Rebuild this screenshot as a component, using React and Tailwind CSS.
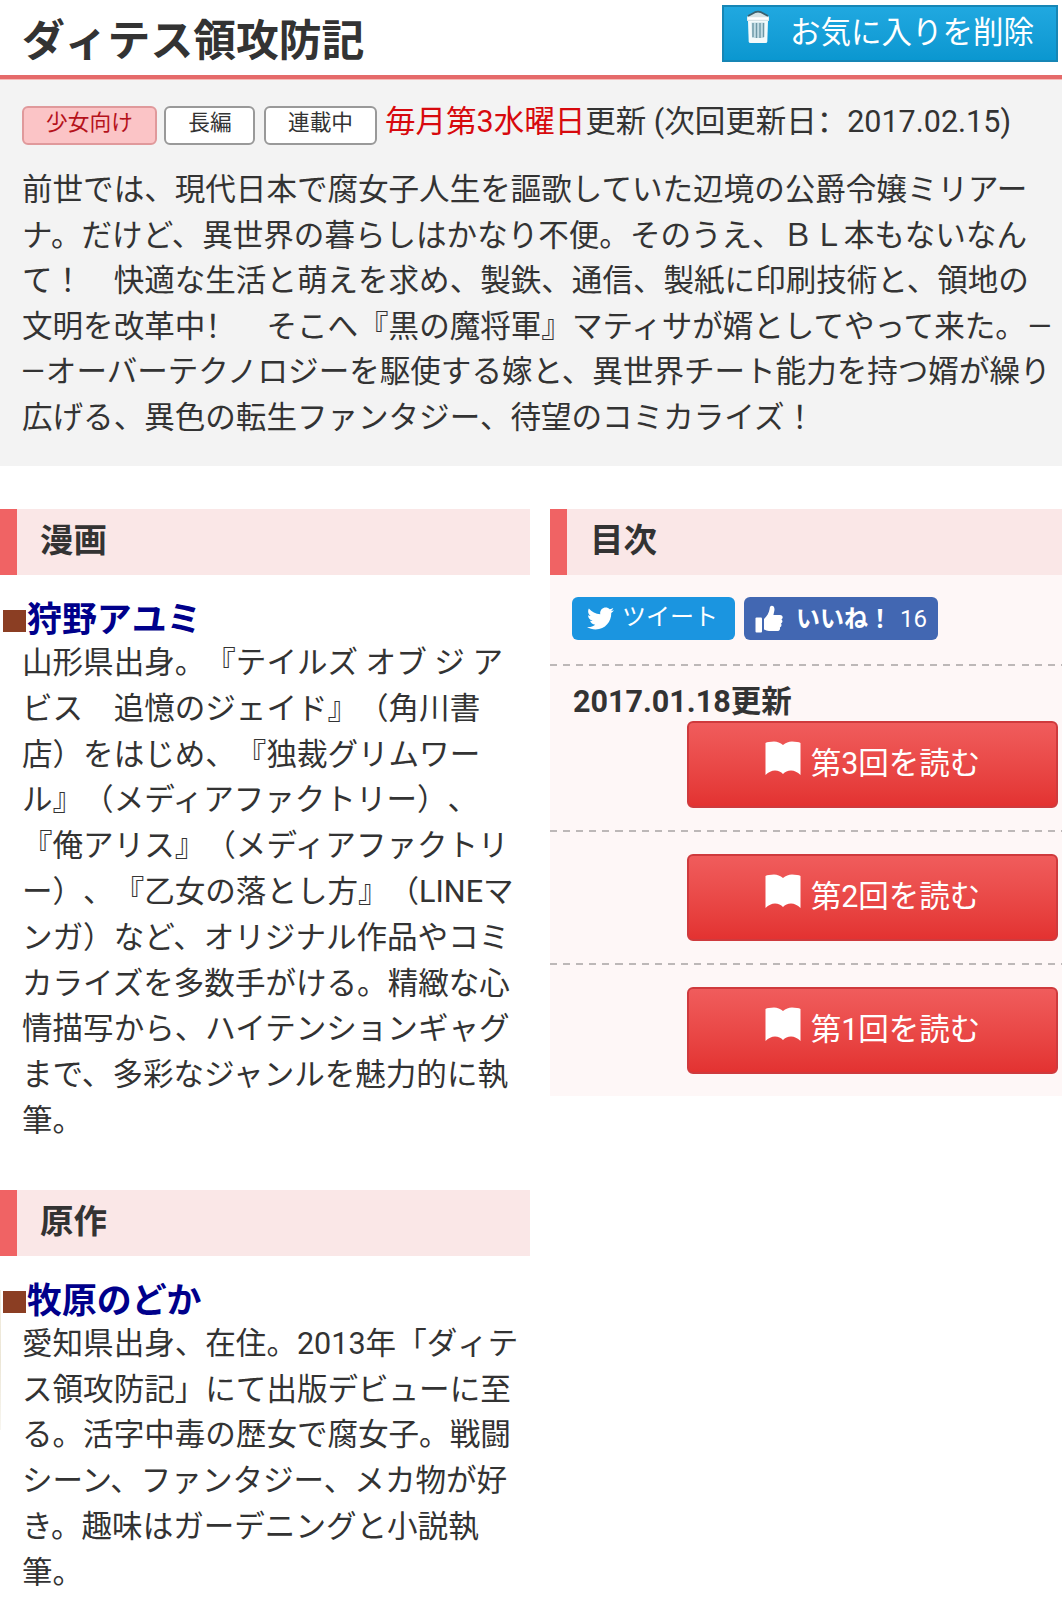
import { FaTwitter } from 'react-icons/fa';

const synopsis = [
  '前世では、現代日本で腐女子人生を謳歌していた辺境の公爵令嬢ミリアー',
  'ナ。だけど、異世界の暮らしはかなり不便。そのうえ、ＢＬ本もないなん',
  'て！　快適な生活と萌えを求め、製鉄、通信、製紙に印刷技術と、領地の',
  <>文明を改革中<span className="font-['Noto_Sans_CJK_SC',sans-serif] leading-none">！　</span>そこへ『黒の魔将軍』マティサが婿としてやって来た。<span className="ml-[2px]">—</span></>,
  <><span className="-ml-px mr-px">—</span>オーバーテクノロジーを駆使する嫁と、異世界チート能力を持つ婿が繰り</>,
  '広げる、異色の転生ファンタジー、待望のコミカライズ！',
];

const creators = [
  {
    role: '漫画',
    name: '狩野アユミ',
    bio: [
      '山形県出身。『テイルズ オブ ジ ア',
      'ビス　追憶のジェイド』（角川書',
      '店）をはじめ、『独裁グリムワー',
      'ル』（メディアファクトリー）、',
      '『俺アリス』（メディアファクトリ',
      'ー）、『乙女の落とし方』（LINEマ',
      'ンガ）など、オリジナル作品やコミ',
      'カライズを多数手がける。精緻な心',
      '情描写から、ハイテンションギャグ',
      'まで、多彩なジャンルを魅力的に執',
      '筆。',
    ],
  },
  {
    role: '原作',
    name: '牧原のどか',
    bio: [
      '愛知県出身、在住。2013年「ダィテ',
      'ス領攻防記」にて出版デビューに至',
      'る。活字中毒の歴女で腐女子。戦闘',
      'シーン、ファンタジー、メカ物が好',
      'き。趣味はガーデニングと小説執',
      '筆。',
    ],
  },
];

const episodes = [
  { number: 3, updated: '2017.01.18更新' },
  { number: 2 },
  { number: 1 },
];

function TrashIcon() {
  return (
    <svg viewBox="0 0 24 34" className="h-[34px] w-6">
      <path d="M1 11 V7.5 Q1 6 3 5.5 L9 2.5 Q12 1.5 15 2.5 L21 5.5 Q23 6 23 7.5 V11Z" fill="#d5e2e5" />
      <path d="M2 6 L9 2.2 Q12 1 15 2.2 L22 6" fill="none" stroke="#3d616e" strokeWidth="1.8" />
      <path d="M1.5 8.5 H22.5" stroke="#fff" strokeWidth="2.5" />
      <path d="M2 11 H22 L21.3 31.5 Q21.2 33 19.5 33 H4.5 Q2.8 33 2.7 31.5Z" fill="#f3fafb" />
      <path d="M5.5 12.5 H18.5 L18 28 H6Z" fill="#c3dde5" />
      <path d="M7 13 V27 M10.5 13 V28 M14 13 V28 M17.5 13 V27" stroke="#6d98a6" strokeWidth="1.4" />
    </svg>
  );
}

function ThumbIcon() {
  return (
    <svg viewBox="0 0 28 28" className="h-7 w-7" fill="#fff">
      <rect x="0.5" y="12.5" width="6.5" height="15" rx="1" />
      <path d="M9 14 C12 11 14 8 14.6 4 C14.8 1.5 15.5 0.7 16.8 0.7 C19 0.7 19.8 3 19.4 5.5 L18.4 10 H25 C28.2 10 28.4 13.3 26.4 14.3 C28 15.5 27.6 17.8 26 18.5 C27 20 26.4 21.8 24.9 22.4 C25.5 24.5 24.2 26 22 26 H14 C12 26 11 25 9 24.5Z" />
    </svg>
  );
}

function BookIcon() {
  return (
    <svg viewBox="0 0 36 35" className="h-[35px] w-9" fill="#fff">
      <path d="M0.5 2 Q3 0.5 9 0.5 Q14 0.5 18 4 Q22 0.5 27 0.5 Q33 0.5 35.5 2 V34 Q31 29.5 26 29.5 Q21 29.5 18 33 Q15 29.5 10 29.5 Q5 29.5 0.5 34Z" />
    </svg>
  );
}

function SectionHeading({ children }) {
  return (
    <h2 className="h-[66px] border-l-[17px] border-[#f06364] bg-[#fae7e7] pl-[23px] text-[33.5px] leading-[64px] font-bold">
      {children}
    </h2>
  );
}

function Lines({ lines, className }) {
  return (
    <p className={className}>
      {lines.map((line, index) => (
        <span key={index} className="block whitespace-nowrap">{line}</span>
      ))}
    </p>
  );
}

// Dashed rule between the rows of the contents list
function DashedRule() {
  return (
    <div className="h-[2px] bg-[repeating-linear-gradient(90deg,#bdb8b8_0,#bdb8b8_7px,transparent_7px,transparent_13.1px)]" />
  );
}

function Episode({ number, updated }) {
  return (
    <li>
      <DashedRule />
      <div className="pt-[22px] pr-1 pb-[22px]">
        {updated && <p className="-mt-[9px] mb-0 h-[42px] pl-[23px] text-[30.5px] leading-[46px] font-bold">{updated}</p>}
        <a className="ml-auto flex h-[87px] w-[371px] justify-center rounded-[6px] border-2 border-[#cf3a3d] bg-linear-to-b from-[#f05c5c] to-[#e33231] text-white">
          <span className="mt-[18px] mr-[10px]"><BookIcon /></span>
          <span className="text-[30.5px] leading-[82px]">第{number}回を読む</span>
        </a>
      </div>
    </li>
  );
}

function App() {
  return (
    <div className="relative h-[1621px] w-[1062px] overflow-hidden bg-white font-['Roboto','Noto_Sans_CJK_JP',sans-serif] text-[#333] [text-spacing-trim:space-all]">
      <header className="flex h-[79px] justify-between border-b-4 border-[#e56a6a] pr-1 pl-[22px]">
        <h1 className="text-[42.8px] leading-[82px] font-bold">ダィテス領攻防記</h1>
        <a className="mt-[5px] flex h-[57px] w-[336px] border-2 border-[#1686b5] bg-linear-to-b from-[#20a8e0] to-[#0a97d0] pl-[22px] text-white">
          <span className="mt-[3px]"><TrashIcon /></span>
          <span className="ml-[20px] text-[30.5px] leading-[52px]">お気に入りを削除</span>
        </a>
      </header>

      <section className="h-[387px] border-t border-[#f7b9b7] bg-[#f3f3f3] pt-[19px] pl-[22px]">
        <div className="flex h-[68px]">
          <div className="flex pt-[7px] text-[21.7px] leading-[30px]">
            <span className="h-[39px] w-[135px] rounded-[6px] border-2 border-[#e0999b] bg-[#fbc4c6] text-center text-[#b5121b]">少女向け</span>
            <span className="ml-[7px] h-[39px] w-[91px] rounded-[6px] border-2 border-[#999] bg-white pl-px text-center">長編</span>
            <span className="ml-[9px] h-[39px] w-[113px] rounded-[6px] border-2 border-[#999] bg-white text-center">連載中</span>
          </div>
          <p className="ml-2 text-[30.5px] leading-[46px] whitespace-nowrap">
            <span className="text-[#d7090d]">毎月第3水曜日</span>更新 (次回更新日<span className="font-['Noto_Sans_CJK_SC',sans-serif] leading-none">：</span>2017.02.15)
          </p>
        </div>
        <Lines lines={synopsis} className="text-[30.55px] leading-[45.6px]" />
      </section>

      <div className="flex items-start gap-5 pt-[43px]">
        <div className="w-[530px]">
          {creators.map((creator) => (
            <section key={creator.role} className="mb-[46px]">
              <SectionHeading>{creator.role}</SectionHeading>
              <h3 className="flex h-[65px] items-start pt-[19px] pl-[3px] text-[34.9px] leading-[53px] font-bold text-[#00008b]">
                <span className="mt-[16px] mr-[1px] h-[22px] w-[23px] bg-[#8b3e23]" />
                {creator.name}
              </h3>
              <Lines lines={creator.bio} className="pl-[22px] text-[30.55px] leading-[45.8px]" />
            </section>
          ))}
        </div>

        <div className="w-[512px] bg-[#fef7f7]">
          <SectionHeading>目次</SectionHeading>
          <div className="flex gap-[9px] pt-[22px] pb-[24px] pl-[22px] text-white">
            <a className="flex h-[43px] w-[163px] items-center rounded-[6px] bg-[#1b95e0] pl-[15px]">
              <FaTwitter className="h-[27px] w-[27px]" />
              <span className="ml-[8px] pb-[3px] text-[24px] leading-[40px]">ツイート</span>
            </a>
            <a className="flex h-[43px] w-[194px] items-center rounded-[6px] bg-[#4267b2] pl-[11px]">
              <ThumbIcon />
              <span className="ml-[13px] text-[24px] font-bold">いいね！</span>
              <span className="ml-[8px] text-[24px]">16</span>
            </a>
          </div>
          <ul>
            {episodes.map((episode) => (
              <Episode key={episode.number} {...episode} />
            ))}
          </ul>
        </div>
      </div>

      {/* Edge of the collapsed side drawer */}
      <div className="absolute top-[1290px] left-0 h-[140px] w-px bg-linear-to-b from-[#f3eee0] via-[#ece6d6] to-[#f8f6f0]" />
    </div>
  );
}

export default App;
